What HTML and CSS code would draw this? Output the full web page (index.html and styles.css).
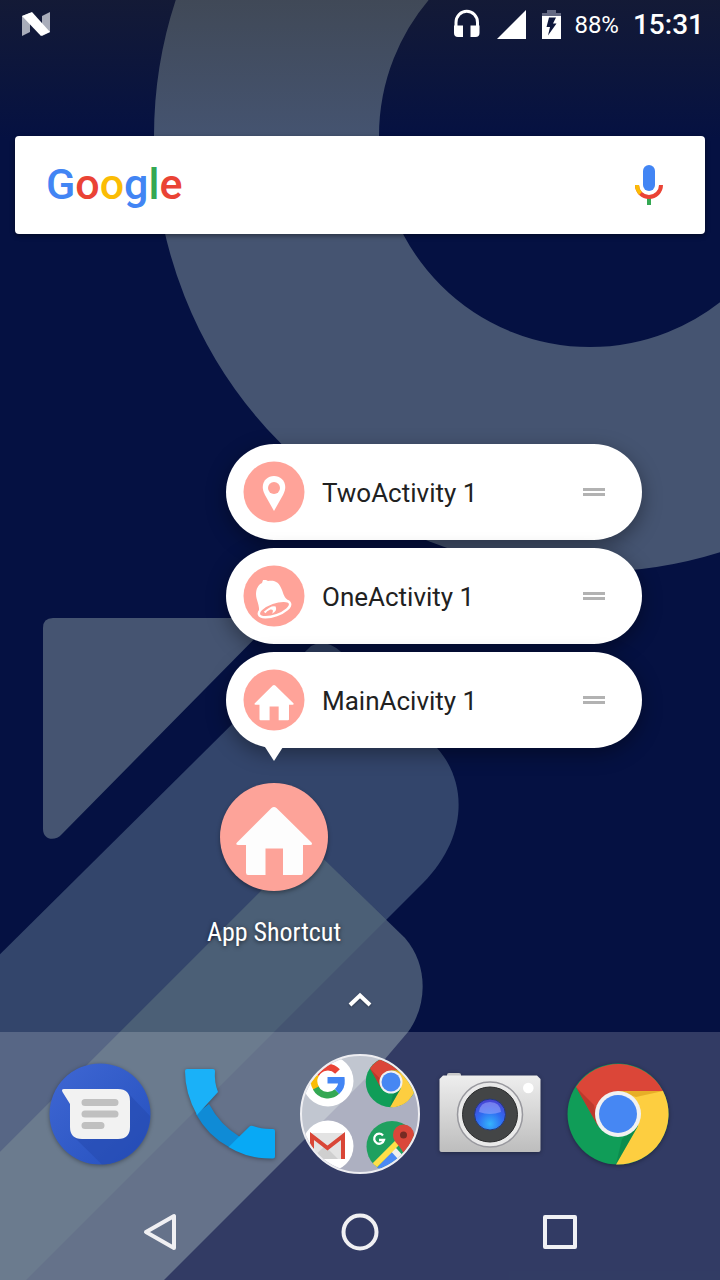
FILE: index.html
```html
<!DOCTYPE html>
<html lang="en">
<head>
<meta charset="utf-8">
<meta name="viewport" content="width=device-width, initial-scale=1">
<title>Home screen</title>
<link rel="stylesheet" href="styles.css">
</head>
<body>
<svg class="defs" aria-hidden="true">
  <defs>
    <symbol id="house" viewBox="-55 -55 110 110">
      <path d="M-2.500-29Q0-31 2.500-29L37.500 5.500Q39 8 36 8H29V35.500Q29 38 27 38H9V11.500H-8.500V38H-26Q-28 38-28 35.500V8H-35.500Q-39 8-37 5.500Z"/>
    </symbol>
    <symbol id="chrome" viewBox="-60 -60 120 120">
      <circle r="50.500" fill="#109d58"/>
      <path d="M-42-27A50.500 50.500 0 0 1 45-23H0L-20 12Z" fill="#db4638"/>
      <path d="M45-23A50.500 50.500 0 0 1-2 50.500L20 12 0-23Z" fill="#fdce40"/>
      <path d="M0-23H45L18-17Z" fill="#d99a18" opacity=".6"/>
      <path d="M-42-27L-20 12-24-9Z" fill="#9c2a20" opacity=".45"/>
      <path d="M-2 50.500L20 12 4 25Z" fill="#08733e" opacity=".4"/>
      <circle r="23" fill="#f1f1f1"/>
      <circle r="19" fill="#4687f3"/>
    </symbol>
  </defs>
</svg>
<div class="screen">
  <svg class="wallpaper" viewBox="0 0 720 1280" preserveAspectRatio="xMidYMid slice" aria-hidden="true">
    <defs>
      <clipPath id="band"><path d="M-40 994L311 646Q325 638 340 651L437 748C466 780 470 835 423 883L-40 1346Z"/></clipPath>
      <linearGradient id="scrim" x1="0" y1="0" x2="0" y2="1">
        <stop offset="0" stop-color="#352f1b" stop-opacity=".3"/>
        <stop offset="1" stop-color="#352f1b" stop-opacity="0"/>
      </linearGradient>
    </defs>
    <rect width="720" height="1280" fill="#051142"/>
    <circle cx="590" cy="136" r="323.500" fill="none" stroke="#455471" stroke-width="225"/>
    <path d="M53 618H275L62 834C55 842 43 840 43 829V628Q43 618 53 618Z" fill="#455471"/>
    <path d="M-40 994L311 646Q325 638 340 651L437 748C466 780 470 835 423 883L-40 1346Z" fill="#33456b"/>
    <path d="M-40 1192L308 844 405 938C427 963 429 1003 408 1032L385 1059-40 1484Z" fill="#445471"/>
    <path d="M-40 1192L308 844 405 938C427 963 429 1003 408 1032L385 1059-40 1484Z" fill="#4b5f76" clip-path="url(#band)"/>
    <rect width="720" height="140" fill="url(#scrim)"/>
  </svg>

  <header class="status">
    <svg class="status-n" width="28" height="24" viewBox="0 0 28 24" aria-label="Android N">
      <path d="M0 4L8 1V20L0 24ZM20 4L28 0V20L20 24Z" fill="#a9adba"/>
      <path d="M0 4L10 0 28 20 19 24Z" fill="#fff"/>
    </svg>
    <svg class="status-head" width="28" height="30" viewBox="0 0 28 30" aria-label="Headphones">
      <path d="M3 19V13.500A10.500 11 0 0 1 24.500 13.500V19" fill="none" stroke="#fff" stroke-width="3"/>
      <path d="M1 16.500H10V28H5Q1 28 1 24ZM17.500 16.500H26.500V24Q26.500 28 22.500 28H17.500Z" fill="#fff"/>
    </svg>
    <svg class="status-signal" width="29" height="29" viewBox="0 0 29 29" aria-label="Signal"><path d="M0 29L29 0V29Z" fill="#fff"/></svg>
    <svg class="status-battery" width="19" height="29" viewBox="0 0 19 29" aria-label="Charging">
      <path d="M0 3H5V0H14V3H19V7H0Z" fill="#636882"/>
      <path d="M0 6H19V29H0Z" fill="#fff"/>
      <path d="M7 7.500H14L11 13.500H14.500L6 25.500 8 17H4.500Z" fill="#0e173c"/>
    </svg>
    <span class="battery-text">88%</span>
    <time class="clock">15:31</time>
  </header>

  <div class="search" role="search">
    <button class="wordmark" type="button"><span class="blue">G</span><span class="red">o</span><span class="yellow">o</span><span class="blue">g</span><span class="green">l</span><span class="red">e</span></button>
    <button class="mic" type="button" aria-label="Voice search">
      <svg width="28" height="40" viewBox="0 0 28 40">
        <rect x="8" width="12" height="26" rx="6" fill="#4285f4"/>
        <path d="M12 33H16V40H12Z" fill="#34a853"/>
        <path d="M2 20A12 12 0 0 0 26 20" fill="none" stroke="#ea4335" stroke-width="4"/>
        <path d="M2 20A12 12 0 0 0 5.500 28.500" fill="none" stroke="#fbbc05" stroke-width="4"/>
      </svg>
    </button>
  </div>

  <main class="home">
    <div class="shortcuts">
      <button class="shortcut" type="button">
        <svg class="badge" viewBox="-31 -31 62 62"><circle r="30.500" fill="#ffa399"/><path d="M0 19L-9 3C-15-8-8-16 0-16S15-8 9 3Z" fill="#fff"/><circle cy="-4" r="6" fill="#ffa399"/></svg>
        <span class="label">TwoActivity 1</span><span class="handle"></span>
      </button>
      <button class="shortcut" type="button">
        <svg class="badge" viewBox="-31 -31 62 62"><circle r="30.500" fill="#ffa399"/>
          <path d="M-12-13L-11-16-8-16-6-15C1-16 5-14 8-6C10 0 11 3 16 5L-15 17C-14 9-18 4-18-2C-18-7-16-11-12-13Z" fill="#fff"/>
          <g transform="translate(.5 13) rotate(-20)"><ellipse rx="16.500" ry="6.500" fill="#ffa399" stroke="#fff" stroke-width="2.500"/><path d="M-11-1Q-2-5 2-2 2 3-4 3.500 0 0-4-1-8-1-10 1Z" fill="#fff"/></g></svg>
        <span class="label">OneActivity 1</span><span class="handle"></span>
      </button>
      <button class="shortcut anchor" type="button">
        <svg class="badge" viewBox="-31 -31 62 62"><circle r="30.500" fill="#ffa399"/><use href="#house" x="-28.500" y="-28" width="57" height="57" fill="#fff"/></svg>
        <span class="label">MainAcivity 1</span><span class="handle"></span>
      </button>
    </div>
    <a class="app" href="#app">
      <svg class="app-icon" viewBox="-55 -55 110 110"><circle r="54" fill="#fda399"/><use href="#house" x="-55" y="-55" width="110" height="110" fill="#fdfdfd"/></svg>
      <span class="app-name">App Shortcut</span>
    </a>
    <button class="drawer" type="button" aria-label="All apps">
      <svg width="28" height="24" viewBox="0 0 28 24"><path d="M4 17L14 7.500 24 17" fill="none" stroke="#fff" stroke-width="4"/></svg>
    </button>
  </main>

  <footer class="bottom">
    <div class="dock">
      <a href="#messages" aria-label="Messages"><svg class="dock-icon" viewBox="0 0 120 120">
        <defs><linearGradient id="msg" x1="0" y1="0" x2="1" y2="1"><stop offset="0" stop-color="#3f67d3"/><stop offset="1" stop-color="#2550be"/></linearGradient></defs>
        <circle cx="60" cy="60" r="50.500" fill="url(#msg)"/>
        <path d="M88 39L110 62C109 88 88 110 62 110.500L34 83Z" fill="#274bb0" opacity=".6"/>
        <path d="M24 35H78Q90 35 90 47V73Q90 85 78 85H42Q30 85 30 73V50L22.500 38Q21 35 24 35Z" fill="#f2f2f2"/>
        <path d="M45 48.500H75M45 60H75M45 71.500H61" stroke="#c0c0c0" stroke-width="7" stroke-linecap="round"/>
      </svg></a>
      <a href="#phone" aria-label="Phone"><svg class="dock-icon" viewBox="0 0 120 120">
        <path d="M26 60L39 50Q50 71 70 83L59 93Q38 82 26 60Z" fill="#0f8bd6"/>
        <path d="M17 15H43Q45 15 45 17Q44 28 48 38L27 61Q15 39 15 17Q15 15 17 15Z" fill="#1ab1f8"/>
        <path d="M58.500 93L79 73Q80.500 71 83 72Q92 75.500 103 75Q105 75 105 77V102.500Q105 104.500 103 104.500Q78 105 58.500 93Z" fill="#08a9f5"/>
      </svg></a>
      <button type="button" aria-label="Google folder"><svg class="dock-icon folder" viewBox="0 0 120 120">
        <defs><clipPath id="disc"><circle cx="60" cy="60" r="58"/></clipPath><clipPath id="map"><circle cx="92" cy="92.500" r="25.500"/></clipPath></defs>
        <circle cx="60" cy="60" r="59" fill="#fff" opacity=".6"/>
        <g clip-path="url(#disc)">
          <circle cx="28" cy="27" r="25.500" fill="#fff"/>
          <g fill="none" stroke-width="6.500">
            <path d="M16 20.300A13.500 13.500 0 0 1 37.500 17.500" stroke="#ea4335"/>
            <path d="M16.300 34.500A13.500 13.500 0 0 1 16 20.300" stroke="#fbbc05"/>
            <path d="M37 37.500A13.500 13.500 0 0 1 15.800 34" stroke="#34a853"/>
            <path d="M27.500 26.300H41.500A13.500 13.500 0 0 1 37 37.500" stroke="#4285f4"/>
          </g>
          <use href="#chrome" x="61" y="-2" width="60" height="60"/>
          <circle cx="28" cy="92" r="25.500" fill="#fff"/>
          <path d="M10 79H45V105H10Z" fill="#e3e3e3"/><path d="M14 102L25 92 38 105H14Z" fill="#cfcfcf"/>
          <path d="M12 105V82L27.500 94 43 82V105" fill="none" stroke="#d94637" stroke-width="4"/>
          <g clip-path="url(#map)">
            <path d="M66 66H118V119H66Z" fill="#1fa05f"/>
            <path d="M92 97L110 117H74Z" fill="#4a89f4"/>
            <path d="M92 94L112 116" fill="none" stroke="#eee" stroke-width="6"/>
            <path d="M69 117L99 87" stroke="#ffdf48" stroke-width="6"/>
          </g>
          <path d="M83 81.500A5 5 0 1 0 84 86H79" fill="none" stroke="#fff" stroke-width="2.300"/>
          <path d="M104 101C101 91 93 89 93 81A10.500 10.500 0 0 1 114 81C114 89 107 92 104 101Z" fill="#da473a"/>
          <circle cx="103.500" cy="81" r="3.500" fill="#762b23"/>
        </g>
        <circle cx="60" cy="60" r="59" fill="none" stroke="#eeeef2" stroke-width="2"/>
      </svg></button>
      <a href="#camera" aria-label="Camera"><svg class="dock-icon" viewBox="0 0 120 120">
        <defs>
          <linearGradient id="body" x1="0" y1="0" x2="0" y2="1"><stop offset="0" stop-color="#eee"/><stop offset="1" stop-color="#bdbdbd"/></linearGradient>
          <radialGradient id="glass" cx=".5" cy=".8" r=".8"><stop offset="0" stop-color="#35b4fb"/><stop offset=".5" stop-color="#2f6df2"/><stop offset="1" stop-color="#4a3fd0"/></radialGradient>
        </defs>
        <rect x="17" y="19" width="14" height="5" rx="2" fill="#c9c9c9"/>
        <path d="M13 21.500H107L110.500 25V96Q110.500 98 108.500 98H11.500Q9.500 98 9.500 96V25Z" fill="url(#body)"/>
        <circle cx="60" cy="60.500" r="32.500" fill="#e9e9e9" stroke="#98989e" stroke-width="1.500"/>
        <circle cx="60" cy="60.500" r="27.500" fill="#434546" stroke="#2b2c2d"/>
        <circle cx="60" cy="60.500" r="15.500" fill="url(#glass)" stroke="#233a7c"/>
        <path d="M49 58Q50 48 60 48T71 58Q60 62 49 58Z" fill="#a9b0ff" opacity=".5"/>
        <circle cx="98.300" cy="34" r="5.300" fill="#fff"/>
      </svg></a>
      <a href="#chrome-app" aria-label="Chrome"><svg class="dock-icon" viewBox="0 0 120 120"><use href="#chrome" x="-2" y="0" width="120" height="120"/></svg></a>
    </div>
    <nav class="nav">
      <button type="button" aria-label="Back"><svg class="nav-icon" viewBox="0 0 40 40"><path d="M34 4V36L6 20Z"/></svg></button>
      <button type="button" aria-label="Home"><svg class="nav-icon" viewBox="0 0 40 40"><circle cx="20" cy="20" r="16.500"/></svg></button>
      <button type="button" aria-label="Recents"><svg class="nav-icon" viewBox="0 0 40 40"><rect x="5" y="5" width="30" height="30"/></svg></button>
    </nav>
  </footer>
</div>
</body>
</html>
```

FILE: styles.css
```css
* { box-sizing: border-box; }
body { margin: 0; font-family: Roboto, "Liberation Sans", sans-serif; background: #051142; }
button { padding: 0; border: 0; background: none; font: inherit; color: inherit; cursor: pointer; }
a { color: inherit; text-decoration: none; }
svg { display: block; flex: none; }
.defs { position: absolute; width: 0; height: 0; }

.screen { position: relative; display: flex; flex-direction: column; min-height: 100vh; overflow: hidden; isolation: isolate; }
.wallpaper { position: absolute; inset: 0; z-index: -1; width: 100%; height: 100%; }

.status { display: flex; align-items: center; height: 50px; padding: 0 16px 0 22px; color: #fff; }
.status-head { margin-left: auto; margin-right: 16px; }
.status-head, .status-n, .status-signal, .status-battery { margin-bottom: 2px; }
.status-signal { margin-right: 16px; }
.status-battery { margin-right: 13px; }
.battery-text { margin-right: 14px; font-size: 24px; line-height: 50px; }
.clock { font-size: 28px; font-weight: 500; line-height: 50px; }

.search { display: flex; align-items: center; justify-content: space-between; height: 98px; margin: 86px 15px 0; padding: 0 42px 0 31px; border-radius: 4px; background: #fff; box-shadow: 0 2px 5px rgba(0, 0, 0, .4); }
.wordmark { padding-bottom: 2px; font-size: 43px; font-weight: 500; line-height: 56px; }
.blue { color: #4285f4; }
.red { color: #ea4335; }
.yellow { color: #fbbc05; }
.green { color: #34a853; }

.home { display: flex; flex: 1; flex-direction: column; justify-content: flex-end; align-items: flex-start; padding-bottom: 20px; }
.shortcuts { display: flex; flex-direction: column; gap: 8px; width: 416px; margin-left: 226px; }
.shortcut { position: relative; display: flex; align-items: center; gap: 17px; height: 96px; padding: 0 37px 0 17px; border-radius: 48px; background: #fff; color: #212121; font-size: 26px; line-height: 32px; box-shadow: 0 6px 20px rgba(0, 0, 0, .36); }
.badge { width: 62px; height: 62px; }
.label { flex: 1; padding-top: 2px; text-align: left; }
.handle { width: 22px; height: 8px; border: solid #b2b2b2; border-width: 3px 0; }
.anchor::after { content: ""; position: absolute; top: 95px; left: 39px; border: solid transparent; border-width: 14px 9px 0; border-top-color: #fff; }

.app { display: flex; flex-direction: column; align-items: center; gap: 24px; width: 144px; margin: 34px 0 40px 202px; color: #fff; }
.app-icon { width: 110px; height: 110px; filter: drop-shadow(0 2px 2px rgba(0, 0, 0, .35)); }
.app-name { font-family: "Roboto Condensed", Roboto, sans-serif; font-size: 26px; line-height: 32px; white-space: nowrap; text-shadow: 0 1px 4px rgba(0, 0, 0, .6); }
.drawer { align-self: center; filter: drop-shadow(0 1px 1px rgba(0, 0, 0, .3)); }

.bottom { background: rgba(255, 255, 255, .18); }
.dock { display: grid; grid-template-columns: repeat(5, 1fr); justify-items: center; padding: 22px 35px 10px; }
.dock-icon { width: 120px; height: 120px; filter: drop-shadow(0 1px 2px rgba(0, 0, 0, .35)); }
.folder { filter: none; }
.nav { display: grid; grid-template-columns: repeat(3, 1fr); justify-items: center; align-items: center; height: 96px; padding: 0 60px; }
.nav-icon { width: 40px; height: 40px; fill: none; stroke: #f0f0f3; stroke-width: 4px; stroke-linejoin: round; }
```
